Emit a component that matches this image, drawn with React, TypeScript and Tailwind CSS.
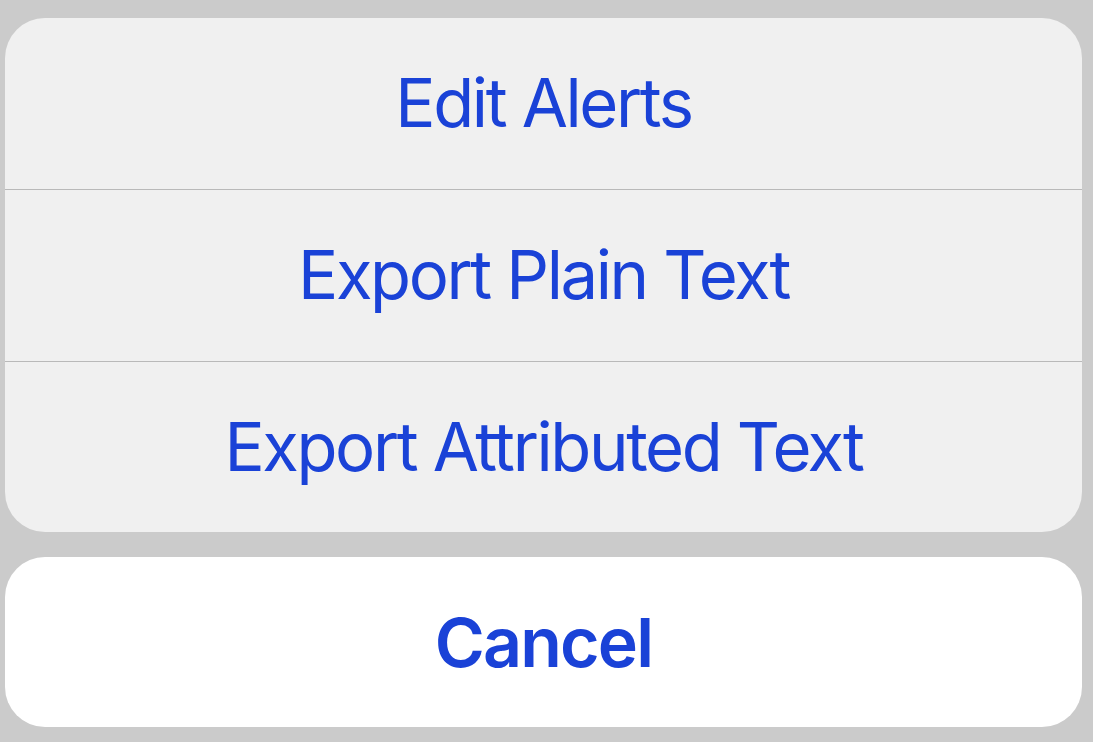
const actions = [
  { label: 'Edit Alerts', h: 'h-[171px]' },
  { label: 'Export Plain Text', h: 'h-[172px] border-t border-[#b9b9b9]' },
  { label: 'Export Attributed Text', h: 'h-[171px] border-t border-[#b9b9b9]' },
];

export default function App() {
  return (
    <div
      className="h-[742px] w-[1093px] overflow-hidden bg-[#cbcbcb] pt-[18px] pl-[5px] pr-[11px]"
      style={{ fontFamily: 'Inter, "Noto Sans", sans-serif' }}
    >
      <div className="overflow-hidden rounded-[40px] bg-[#f0f0f0]">
        {actions.map(({ label, h }) => (
          <div
            key={label}
            className={`flex items-center justify-center text-[67px] tracking-[-2.4px] text-[#1a42d7] ${h}`}
          >
            {label}
          </div>
        ))}
      </div>
      <div className="mt-[25px] flex h-[170px] items-center justify-center rounded-[40px] bg-white text-[68px] font-semibold tracking-[-1.8px] text-[#1a42d7]">
        Cancel
      </div>
    </div>
  );
}
